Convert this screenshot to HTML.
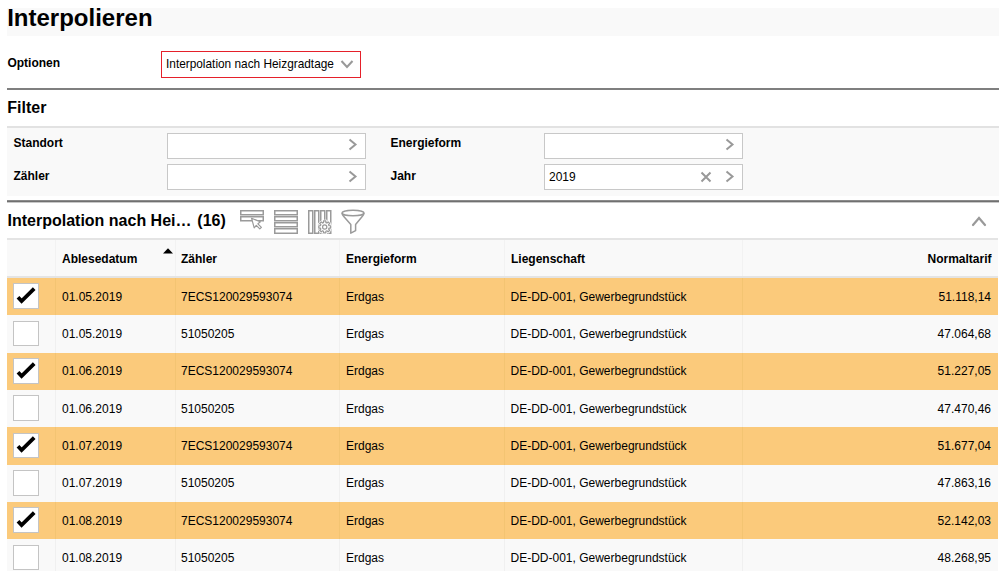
<!DOCTYPE html>
<html><head><meta charset="utf-8">
<style>
html,body{margin:0;padding:0;background:#fff;width:1000px;height:571px;overflow:hidden;position:relative}
body{font-family:"Liberation Sans",sans-serif;color:#000}
.t{position:absolute;white-space:nowrap}
.r{position:absolute;box-sizing:border-box}
</style></head><body>
<div class="r" style="left:7px;top:8px;width:992px;height:28px;background:#f9f9f9"></div>
<div class="t" style="left:7.2px;top:6.18px;font-size:24px;line-height:24px;font-weight:700;color:#000;">Interpolieren</div>
<div class="t" style="left:7.4px;top:57.14px;font-size:12px;line-height:12px;font-weight:700;color:#000;">Optionen</div>
<div class="r" style="left:161px;top:51px;width:200px;height:27px;border:1px solid #e5202a;background:#fff"></div>
<div class="t" style="left:166px;top:58.77px;font-size:11.85px;line-height:11.85px;font-weight:400;color:#000;">Interpolation nach Heizgradtage</div>
<svg class="r" style="left:340px;top:59px" width="14" height="11" viewBox="0 0 14 11"><path d="M1.5 2 L7 8 L12.5 2" fill="none" stroke="#999" stroke-width="2"/></svg>
<div class="r" style="left:7px;top:88px;width:992px;height:2px;background:#7f7f7f"></div>
<div class="t" style="left:7.3px;top:100.26px;font-size:16px;line-height:16px;font-weight:700;color:#000;">Filter</div>
<div class="r" style="left:7px;top:126px;width:992px;height:2px;background:#e2e2e2"></div>
<div class="r" style="left:7px;top:128px;width:992px;height:68px;background:#f9f9f9"></div>
<div class="t" style="left:13.5px;top:137.34px;font-size:12px;line-height:12px;font-weight:700;color:#000;">Standort</div>
<div class="t" style="left:13.5px;top:169.54px;font-size:12px;line-height:12px;font-weight:700;color:#000;">Zähler</div>
<div class="t" style="left:390.5px;top:137.34px;font-size:12px;line-height:12px;font-weight:700;color:#000;">Energieform</div>
<div class="t" style="left:390.5px;top:169.54px;font-size:12px;line-height:12px;font-weight:700;color:#000;">Jahr</div>
<div class="r" style="left:167px;top:133px;width:199px;height:26px;border:1px solid #c8c8c8;background:#fff"></div>
<div class="r" style="left:167px;top:164px;width:199px;height:26px;border:1px solid #c8c8c8;background:#fff"></div>
<div class="r" style="left:544px;top:133px;width:199px;height:26px;border:1px solid #c8c8c8;background:#fff"></div>
<div class="r" style="left:544px;top:164px;width:199px;height:26px;border:1px solid #c8c8c8;background:#fff"></div>
<svg class="r" style="left:348px;top:138px" width="10" height="13" viewBox="0 0 10 13"><path d="M1.5 1.5 L7.5 6.5 L1.5 11.5" fill="none" stroke="#999" stroke-width="2"/></svg>
<svg class="r" style="left:348px;top:170px" width="10" height="13" viewBox="0 0 10 13"><path d="M1.5 1.5 L7.5 6.5 L1.5 11.5" fill="none" stroke="#999" stroke-width="2"/></svg>
<svg class="r" style="left:725px;top:138px" width="10" height="13" viewBox="0 0 10 13"><path d="M1.5 1.5 L7.5 6.5 L1.5 11.5" fill="none" stroke="#999" stroke-width="2"/></svg>
<svg class="r" style="left:725px;top:170px" width="10" height="13" viewBox="0 0 10 13"><path d="M1.5 1.5 L7.5 6.5 L1.5 11.5" fill="none" stroke="#999" stroke-width="2"/></svg>
<div class="t" style="left:549px;top:171.14px;font-size:12px;line-height:12px;font-weight:400;color:#000;">2019</div>
<svg class="r" style="left:700px;top:171px" width="12" height="12" viewBox="0 0 12 12"><path d="M1.5 1.5 L10.5 10.5 M10.5 1.5 L1.5 10.5" fill="none" stroke="#999" stroke-width="2"/></svg>
<div class="r" style="left:7px;top:200px;width:992px;height:1px;background:#8a8a8a"></div>
<div class="r" style="left:7px;top:201px;width:992px;height:1px;background:#707070"></div>
<div class="r" style="left:7px;top:202px;width:992px;height:1px;background:#c8c8c8"></div>
<div class="t" style="left:7.5px;top:213.36px;font-size:16px;line-height:16px;font-weight:700;color:#000;">Interpolation nach Hei…</div>
<div class="t" style="left:197.3px;top:213.36px;font-size:16px;line-height:16px;font-weight:700;color:#000;">(16)</div>
<svg class="r" style="left:238px;top:208px" width="30" height="24" viewBox="0 0 30 24">
<rect x="2.75" y="2.75" width="22.5" height="4" fill="none" stroke="#9a9a9a" stroke-width="1.5"/>
<rect x="2.75" y="8.75" width="22.5" height="4" fill="none" stroke="#9a9a9a" stroke-width="1.5"/>
<path d="M13.6 10.3 L16.2 19.8 L18.3 17.4 L21.8 20.9 L23.4 19.3 L19.9 15.8 L22.4 13.8 Z" fill="#fff" stroke="#9a9a9a" stroke-width="1.2" stroke-linejoin="round"/>
</svg>
<svg class="r" style="left:272px;top:208px" width="28" height="28" viewBox="0 0 28 28">
<rect x="2.75" y="2.75" width="22.5" height="4" fill="none" stroke="#9a9a9a" stroke-width="1.5"/>
<rect x="2.75" y="8.75" width="22.5" height="4" fill="none" stroke="#9a9a9a" stroke-width="1.5"/>
<rect x="2.75" y="14.75" width="22.5" height="4" fill="none" stroke="#9a9a9a" stroke-width="1.5"/>
<rect x="2.75" y="20.75" width="22.5" height="4.5" fill="none" stroke="#9a9a9a" stroke-width="1.5"/>
</svg>
<svg class="r" style="left:306px;top:208px" width="28" height="28" viewBox="0 0 28 28">
<rect x="2.75" y="2.75" width="4" height="22.5" fill="none" stroke="#9a9a9a" stroke-width="1.5"/>
<rect x="8.75" y="2.75" width="4" height="22.5" fill="none" stroke="#9a9a9a" stroke-width="1.5"/>
<rect x="14.75" y="2.75" width="4" height="22.5" fill="none" stroke="#9a9a9a" stroke-width="1.5"/>
<rect x="20.75" y="2.75" width="4" height="22.5" fill="none" stroke="#9a9a9a" stroke-width="1.5"/>
<g transform="translate(18.7 18.9) scale(1.12)">
<path d="M3.86 -1.04 L5.30 -1.03 L5.30 1.03 L3.86 1.04 L3.46 2.00 L4.48 3.02 L3.02 4.48 L2.00 3.46 L1.04 3.86 L1.03 5.30 L-1.03 5.30 L-1.04 3.86 L-2.00 3.46 L-3.02 4.48 L-4.48 3.02 L-3.46 2.00 L-3.86 1.04 L-5.30 1.03 L-5.30 -1.03 L-3.86 -1.04 L-3.46 -2.00 L-4.48 -3.02 L-3.02 -4.48 L-2.00 -3.46 L-1.04 -3.86 L-1.03 -5.30 L1.03 -5.30 L1.04 -3.86 L2.00 -3.46 L3.02 -4.48 L4.48 -3.02 L3.46 -2.00 Z" fill="#fff" stroke="#fff" stroke-width="2.2"/>
<path d="M3.86 -1.04 L5.30 -1.03 L5.30 1.03 L3.86 1.04 L3.46 2.00 L4.48 3.02 L3.02 4.48 L2.00 3.46 L1.04 3.86 L1.03 5.30 L-1.03 5.30 L-1.04 3.86 L-2.00 3.46 L-3.02 4.48 L-4.48 3.02 L-3.46 2.00 L-3.86 1.04 L-5.30 1.03 L-5.30 -1.03 L-3.86 -1.04 L-3.46 -2.00 L-4.48 -3.02 L-3.02 -4.48 L-2.00 -3.46 L-1.04 -3.86 L-1.03 -5.30 L1.03 -5.30 L1.04 -3.86 L2.00 -3.46 L3.02 -4.48 L4.48 -3.02 L3.46 -2.00 Z" fill="none" stroke="#9a9a9a" stroke-width="1.1" stroke-linejoin="round"/>
<circle r="1.9" fill="none" stroke="#9a9a9a" stroke-width="1.1"/>
</g>
</svg>
<svg class="r" style="left:339px;top:208px" width="28" height="28" viewBox="0 0 28 28">
<ellipse cx="14" cy="5" rx="11" ry="2.8" fill="none" stroke="#9a9a9a" stroke-width="1.5"/>
<path d="M3 5.2 Q3.3 7 4.8 8.6 L11.8 16.6 L11.8 25.2 L16.6 22.6 L16.6 16.6 L23.2 8.6 Q24.7 7 25 5.2" fill="none" stroke="#9a9a9a" stroke-width="1.5" stroke-linejoin="round"/>
</svg>
<svg class="r" style="left:970px;top:213px" width="18" height="14" viewBox="0 0 18 14"><path d="M3 12 L9 5 L15 12" fill="none" stroke="#999" stroke-width="2.2" stroke-linecap="round"/></svg>
<div class="r" style="left:7px;top:238px;width:991px;height:2px;background:#e4e4e4"></div>
<div class="r" style="left:7px;top:240px;width:991px;height:36px;background:#f9f9f9"></div>
<div class="r" style="left:7px;top:276px;width:991px;height:2px;background:#e4e4e4"></div>
<div class="r" style="left:55px;top:240px;width:1px;height:36px;background:#f2f2f2"></div>
<div class="r" style="left:175px;top:240px;width:1px;height:36px;background:#f2f2f2"></div>
<div class="r" style="left:339px;top:240px;width:1px;height:36px;background:#f2f2f2"></div>
<div class="r" style="left:504px;top:240px;width:1px;height:36px;background:#f2f2f2"></div>
<div class="r" style="left:742px;top:240px;width:1px;height:36px;background:#f2f2f2"></div>
<div class="t" style="left:62px;top:252.64px;font-size:12px;line-height:12px;font-weight:700;color:#000;">Ablesedatum</div>
<svg class="r" style="left:163px;top:248px" width="10" height="6" viewBox="0 0 10 6"><path d="M0 5.5 L5 0.3 L10 5.5 Z" fill="#000"/></svg>
<div class="t" style="left:181px;top:252.64px;font-size:12px;line-height:12px;font-weight:700;color:#000;">Zähler</div>
<div class="t" style="left:346px;top:252.64px;font-size:12px;line-height:12px;font-weight:700;color:#000;">Energieform</div>
<div class="t" style="left:511px;top:252.64px;font-size:12px;line-height:12px;font-weight:700;color:#000;">Liegenschaft</div>
<div class="t" style="right:8.5px;top:252.64px;font-size:12px;line-height:12px;font-weight:700;color:#000">Normaltarif</div>
<div class="r" style="left:7px;top:278.000px;width:991px;height:37.333px;background:#fbca7b"></div>
<div class="r" style="left:55px;top:278.000px;width:1px;height:37.333px;background:#f3c472"></div>
<div class="r" style="left:175px;top:278.000px;width:1px;height:37.333px;background:#f3c472"></div>
<div class="r" style="left:339px;top:278.000px;width:1px;height:37.333px;background:#f3c472"></div>
<div class="r" style="left:504px;top:278.000px;width:1px;height:37.333px;background:#f3c472"></div>
<div class="r" style="left:742px;top:278.000px;width:1px;height:37.333px;background:#f3c472"></div>
<div class="r" style="left:13px;top:283.300px;width:26px;height:25.7px;border:1px solid #c4c4c4;background:#fff"></div>
<svg class="r" style="left:14px;top:286.000px" width="24" height="20" viewBox="0 0 24 20"><path d="M4.0 11.2 L7.6 15 L20.2 2.6" fill="none" stroke="#000" stroke-width="3.8" stroke-linecap="butt" stroke-linejoin="miter"/></svg>
<div class="t" style="left:62px;top:290.54px;font-size:12px;line-height:12px;font-weight:400;color:#000;">01.05.2019</div>
<div class="t" style="left:181px;top:290.54px;font-size:12px;line-height:12px;font-weight:400;color:#000;">7ECS120029593074</div>
<div class="t" style="left:346px;top:290.54px;font-size:12px;line-height:12px;font-weight:400;color:#000;">Erdgas</div>
<div class="t" style="left:510.5px;top:290.54px;font-size:12px;line-height:12px;font-weight:400;color:#000;">DE-DD-001, Gewerbegrundstück</div>
<div class="t" style="right:9px;top:290.54px;font-size:12px;line-height:12px;font-weight:400;color:#000">51.118,14</div>
<div class="r" style="left:7px;top:315.333px;width:991px;height:37.333px;background:#f9f9f9"></div>
<div class="r" style="left:55px;top:315.333px;width:1px;height:37.333px;background:#f0f0f0"></div>
<div class="r" style="left:175px;top:315.333px;width:1px;height:37.333px;background:#f0f0f0"></div>
<div class="r" style="left:339px;top:315.333px;width:1px;height:37.333px;background:#f0f0f0"></div>
<div class="r" style="left:504px;top:315.333px;width:1px;height:37.333px;background:#f0f0f0"></div>
<div class="r" style="left:742px;top:315.333px;width:1px;height:37.333px;background:#f0f0f0"></div>
<div class="r" style="left:13px;top:320.633px;width:26px;height:25.7px;border:1px solid #c4c4c4;background:#fff"></div>
<div class="t" style="left:62px;top:327.88px;font-size:12px;line-height:12px;font-weight:400;color:#000;">01.05.2019</div>
<div class="t" style="left:181px;top:327.88px;font-size:12px;line-height:12px;font-weight:400;color:#000;">51050205</div>
<div class="t" style="left:346px;top:327.88px;font-size:12px;line-height:12px;font-weight:400;color:#000;">Erdgas</div>
<div class="t" style="left:510.5px;top:327.88px;font-size:12px;line-height:12px;font-weight:400;color:#000;">DE-DD-001, Gewerbegrundstück</div>
<div class="t" style="right:9px;top:327.88px;font-size:12px;line-height:12px;font-weight:400;color:#000">47.064,68</div>
<div class="r" style="left:7px;top:352.666px;width:991px;height:37.333px;background:#fbca7b"></div>
<div class="r" style="left:55px;top:352.666px;width:1px;height:37.333px;background:#f3c472"></div>
<div class="r" style="left:175px;top:352.666px;width:1px;height:37.333px;background:#f3c472"></div>
<div class="r" style="left:339px;top:352.666px;width:1px;height:37.333px;background:#f3c472"></div>
<div class="r" style="left:504px;top:352.666px;width:1px;height:37.333px;background:#f3c472"></div>
<div class="r" style="left:742px;top:352.666px;width:1px;height:37.333px;background:#f3c472"></div>
<div class="r" style="left:13px;top:357.966px;width:26px;height:25.7px;border:1px solid #c4c4c4;background:#fff"></div>
<svg class="r" style="left:14px;top:360.666px" width="24" height="20" viewBox="0 0 24 20"><path d="M4.0 11.2 L7.6 15 L20.2 2.6" fill="none" stroke="#000" stroke-width="3.8" stroke-linecap="butt" stroke-linejoin="miter"/></svg>
<div class="t" style="left:62px;top:365.21px;font-size:12px;line-height:12px;font-weight:400;color:#000;">01.06.2019</div>
<div class="t" style="left:181px;top:365.21px;font-size:12px;line-height:12px;font-weight:400;color:#000;">7ECS120029593074</div>
<div class="t" style="left:346px;top:365.21px;font-size:12px;line-height:12px;font-weight:400;color:#000;">Erdgas</div>
<div class="t" style="left:510.5px;top:365.21px;font-size:12px;line-height:12px;font-weight:400;color:#000;">DE-DD-001, Gewerbegrundstück</div>
<div class="t" style="right:9px;top:365.21px;font-size:12px;line-height:12px;font-weight:400;color:#000">51.227,05</div>
<div class="r" style="left:7px;top:389.999px;width:991px;height:37.333px;background:#f9f9f9"></div>
<div class="r" style="left:55px;top:389.999px;width:1px;height:37.333px;background:#f0f0f0"></div>
<div class="r" style="left:175px;top:389.999px;width:1px;height:37.333px;background:#f0f0f0"></div>
<div class="r" style="left:339px;top:389.999px;width:1px;height:37.333px;background:#f0f0f0"></div>
<div class="r" style="left:504px;top:389.999px;width:1px;height:37.333px;background:#f0f0f0"></div>
<div class="r" style="left:742px;top:389.999px;width:1px;height:37.333px;background:#f0f0f0"></div>
<div class="r" style="left:13px;top:395.299px;width:26px;height:25.7px;border:1px solid #c4c4c4;background:#fff"></div>
<div class="t" style="left:62px;top:402.54px;font-size:12px;line-height:12px;font-weight:400;color:#000;">01.06.2019</div>
<div class="t" style="left:181px;top:402.54px;font-size:12px;line-height:12px;font-weight:400;color:#000;">51050205</div>
<div class="t" style="left:346px;top:402.54px;font-size:12px;line-height:12px;font-weight:400;color:#000;">Erdgas</div>
<div class="t" style="left:510.5px;top:402.54px;font-size:12px;line-height:12px;font-weight:400;color:#000;">DE-DD-001, Gewerbegrundstück</div>
<div class="t" style="right:9px;top:402.54px;font-size:12px;line-height:12px;font-weight:400;color:#000">47.470,46</div>
<div class="r" style="left:7px;top:427.332px;width:991px;height:37.333px;background:#fbca7b"></div>
<div class="r" style="left:55px;top:427.332px;width:1px;height:37.333px;background:#f3c472"></div>
<div class="r" style="left:175px;top:427.332px;width:1px;height:37.333px;background:#f3c472"></div>
<div class="r" style="left:339px;top:427.332px;width:1px;height:37.333px;background:#f3c472"></div>
<div class="r" style="left:504px;top:427.332px;width:1px;height:37.333px;background:#f3c472"></div>
<div class="r" style="left:742px;top:427.332px;width:1px;height:37.333px;background:#f3c472"></div>
<div class="r" style="left:13px;top:432.632px;width:26px;height:25.7px;border:1px solid #c4c4c4;background:#fff"></div>
<svg class="r" style="left:14px;top:435.332px" width="24" height="20" viewBox="0 0 24 20"><path d="M4.0 11.2 L7.6 15 L20.2 2.6" fill="none" stroke="#000" stroke-width="3.8" stroke-linecap="butt" stroke-linejoin="miter"/></svg>
<div class="t" style="left:62px;top:439.87px;font-size:12px;line-height:12px;font-weight:400;color:#000;">01.07.2019</div>
<div class="t" style="left:181px;top:439.87px;font-size:12px;line-height:12px;font-weight:400;color:#000;">7ECS120029593074</div>
<div class="t" style="left:346px;top:439.87px;font-size:12px;line-height:12px;font-weight:400;color:#000;">Erdgas</div>
<div class="t" style="left:510.5px;top:439.87px;font-size:12px;line-height:12px;font-weight:400;color:#000;">DE-DD-001, Gewerbegrundstück</div>
<div class="t" style="right:9px;top:439.87px;font-size:12px;line-height:12px;font-weight:400;color:#000">51.677,04</div>
<div class="r" style="left:7px;top:464.665px;width:991px;height:37.333px;background:#f9f9f9"></div>
<div class="r" style="left:55px;top:464.665px;width:1px;height:37.333px;background:#f0f0f0"></div>
<div class="r" style="left:175px;top:464.665px;width:1px;height:37.333px;background:#f0f0f0"></div>
<div class="r" style="left:339px;top:464.665px;width:1px;height:37.333px;background:#f0f0f0"></div>
<div class="r" style="left:504px;top:464.665px;width:1px;height:37.333px;background:#f0f0f0"></div>
<div class="r" style="left:742px;top:464.665px;width:1px;height:37.333px;background:#f0f0f0"></div>
<div class="r" style="left:13px;top:469.965px;width:26px;height:25.7px;border:1px solid #c4c4c4;background:#fff"></div>
<div class="t" style="left:62px;top:477.21px;font-size:12px;line-height:12px;font-weight:400;color:#000;">01.07.2019</div>
<div class="t" style="left:181px;top:477.21px;font-size:12px;line-height:12px;font-weight:400;color:#000;">51050205</div>
<div class="t" style="left:346px;top:477.21px;font-size:12px;line-height:12px;font-weight:400;color:#000;">Erdgas</div>
<div class="t" style="left:510.5px;top:477.21px;font-size:12px;line-height:12px;font-weight:400;color:#000;">DE-DD-001, Gewerbegrundstück</div>
<div class="t" style="right:9px;top:477.21px;font-size:12px;line-height:12px;font-weight:400;color:#000">47.863,16</div>
<div class="r" style="left:7px;top:501.998px;width:991px;height:37.333px;background:#fbca7b"></div>
<div class="r" style="left:55px;top:501.998px;width:1px;height:37.333px;background:#f3c472"></div>
<div class="r" style="left:175px;top:501.998px;width:1px;height:37.333px;background:#f3c472"></div>
<div class="r" style="left:339px;top:501.998px;width:1px;height:37.333px;background:#f3c472"></div>
<div class="r" style="left:504px;top:501.998px;width:1px;height:37.333px;background:#f3c472"></div>
<div class="r" style="left:742px;top:501.998px;width:1px;height:37.333px;background:#f3c472"></div>
<div class="r" style="left:13px;top:507.298px;width:26px;height:25.7px;border:1px solid #c4c4c4;background:#fff"></div>
<svg class="r" style="left:14px;top:509.998px" width="24" height="20" viewBox="0 0 24 20"><path d="M4.0 11.2 L7.6 15 L20.2 2.6" fill="none" stroke="#000" stroke-width="3.8" stroke-linecap="butt" stroke-linejoin="miter"/></svg>
<div class="t" style="left:62px;top:514.54px;font-size:12px;line-height:12px;font-weight:400;color:#000;">01.08.2019</div>
<div class="t" style="left:181px;top:514.54px;font-size:12px;line-height:12px;font-weight:400;color:#000;">7ECS120029593074</div>
<div class="t" style="left:346px;top:514.54px;font-size:12px;line-height:12px;font-weight:400;color:#000;">Erdgas</div>
<div class="t" style="left:510.5px;top:514.54px;font-size:12px;line-height:12px;font-weight:400;color:#000;">DE-DD-001, Gewerbegrundstück</div>
<div class="t" style="right:9px;top:514.54px;font-size:12px;line-height:12px;font-weight:400;color:#000">52.142,03</div>
<div class="r" style="left:7px;top:539.331px;width:991px;height:37.333px;background:#f9f9f9"></div>
<div class="r" style="left:55px;top:539.331px;width:1px;height:37.333px;background:#f0f0f0"></div>
<div class="r" style="left:175px;top:539.331px;width:1px;height:37.333px;background:#f0f0f0"></div>
<div class="r" style="left:339px;top:539.331px;width:1px;height:37.333px;background:#f0f0f0"></div>
<div class="r" style="left:504px;top:539.331px;width:1px;height:37.333px;background:#f0f0f0"></div>
<div class="r" style="left:742px;top:539.331px;width:1px;height:37.333px;background:#f0f0f0"></div>
<div class="r" style="left:13px;top:544.631px;width:26px;height:25.7px;border:1px solid #c4c4c4;background:#fff"></div>
<div class="t" style="left:62px;top:551.87px;font-size:12px;line-height:12px;font-weight:400;color:#000;">01.08.2019</div>
<div class="t" style="left:181px;top:551.87px;font-size:12px;line-height:12px;font-weight:400;color:#000;">51050205</div>
<div class="t" style="left:346px;top:551.87px;font-size:12px;line-height:12px;font-weight:400;color:#000;">Erdgas</div>
<div class="t" style="left:510.5px;top:551.87px;font-size:12px;line-height:12px;font-weight:400;color:#000;">DE-DD-001, Gewerbegrundstück</div>
<div class="t" style="right:9px;top:551.87px;font-size:12px;line-height:12px;font-weight:400;color:#000">48.268,95</div>
</body></html>
